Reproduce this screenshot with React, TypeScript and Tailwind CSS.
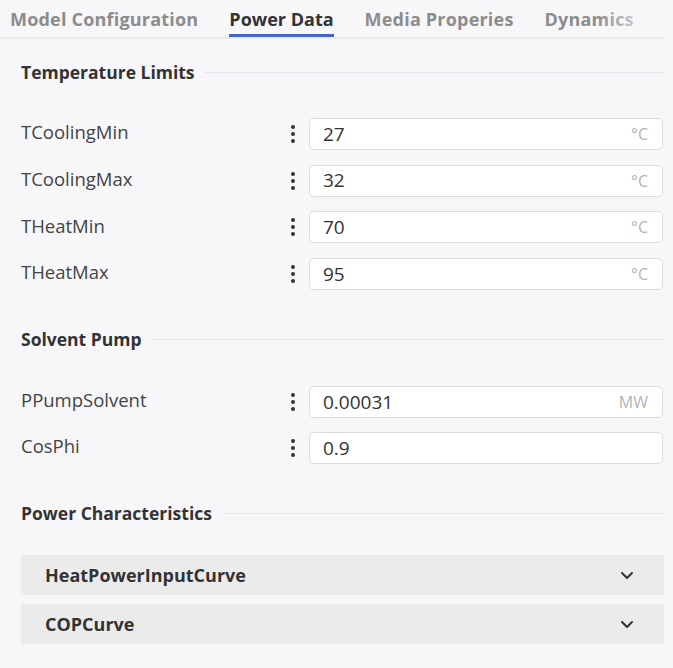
import React from 'react'

const font = { fontFamily: '"Open Sans", "Noto Sans", sans-serif' }

function Kebab() {
  return (
    <div className="flex w-5 flex-col items-center justify-center gap-[3px]">
      <span className="h-[4px] w-[4px] rounded-full bg-[#333]" />
      <span className="h-[4px] w-[4px] rounded-full bg-[#333]" />
      <span className="h-[4px] w-[4px] rounded-full bg-[#333]" />
    </div>
  )
}

function SectionHeading({ title }: { title: string }) {
  return (
    <div className="flex h-6 items-center gap-[10px] pl-[21px] pr-[8px]">
      <span className="text-[17.5px] font-bold text-[#333] whitespace-nowrap">{title}</span>
      <div className="h-px flex-1 bg-[#e6e6ea]" />
    </div>
  )
}

interface FieldProps {
  label: string
  value: string
  unit?: string
}

function Field({ label, value, unit }: FieldProps) {
  return (
    <div className="flex h-8 items-center pl-[21px] pr-[10px]">
      <span className="w-[262px] -mt-[4px] text-[18.5px] text-[#444]">{label}</span>
      <Kebab />
      <div className="ml-[6px] flex h-8 flex-1 items-center justify-between rounded-[5px] border border-[#dcdcdc] bg-white pl-[13px] pr-[14px]">
        <span className="text-[19px] text-[#333]">{value}</span>
        {unit && <span className="text-[16px] text-[#b5b5b5]">{unit}</span>}
      </div>
    </div>
  )
}

function Accordion({ title }: { title: string }) {
  return (
    <div className="ml-[21px] mr-[9px] flex h-10 items-center justify-between bg-[#ebebeb] pl-[24px] pr-[30px]">
      <span className="text-[18px] font-bold text-[#333]">{title}</span>
      <svg width="14" height="9" viewBox="0 0 14 9" fill="none">
        <path d="M2 2l5 5 5-5" stroke="#333" strokeWidth="2" strokeLinecap="round" strokeLinejoin="round" />
      </svg>
    </div>
  )
}

export default function App() {
  const tabs = ['Model Configuration', 'Power Data', 'Media Properies', 'Dynamics']

  return (
    <div className="min-h-screen w-full bg-[#f7f7f9]" style={font}>
      {/* Tabs */}
      <div className="relative mr-[8px] flex h-[39px] items-start gap-[31px] overflow-hidden border-b-2 border-[#ebebee] pl-[10px]">
        {tabs.map((t) => {
          const active = t === 'Power Data'
          return (
            <div
              key={t}
              className={
                active
                  ? 'relative h-[39px] pt-[6px] text-[18px] leading-[26px] font-bold text-[#333] whitespace-nowrap'
                  : 'relative h-[39px] pt-[6px] text-[18px] leading-[26px] font-bold text-[#8c8c8c] whitespace-nowrap tracking-[0.2px]'
              }
            >
              {t}
              {active && <span className="absolute bottom-[2px] left-0 right-0 h-[3px] bg-[#4466cc]" />}
            </div>
          )
        })}
        <div className="pointer-events-none absolute right-0 top-0 h-[36px] w-[70px] bg-gradient-to-r from-transparent to-[#f7f7f9]" />
      </div>

      <div className="pt-[21px]">
        <SectionHeading title="Temperature Limits" />
        <div className="mt-[34px] flex flex-col gap-[14.7px]">
          <Field label="TCoolingMin" value="27" unit="°C" />
          <Field label="TCoolingMax" value="32" unit="°C" />
          <Field label="THeatMin" value="70" unit="°C" />
          <Field label="THeatMax" value="95" unit="°C" />
        </div>

        <div className="mt-[37px]">
          <SectionHeading title="Solvent Pump" />
        </div>
        <div className="mt-[35px] flex flex-col gap-[14px]">
          <Field label="PPumpSolvent" value="0.00031" unit="MW" />
          <Field label="CosPhi" value="0.9" />
        </div>

        <div className="mt-[37px]">
          <SectionHeading title="Power Characteristics" />
        </div>
        <div className="mt-[30px] flex flex-col gap-[9px]">
          <Accordion title="HeatPowerInputCurve" />
          <Accordion title="COPCurve" />
        </div>
      </div>
    </div>
  )
}
